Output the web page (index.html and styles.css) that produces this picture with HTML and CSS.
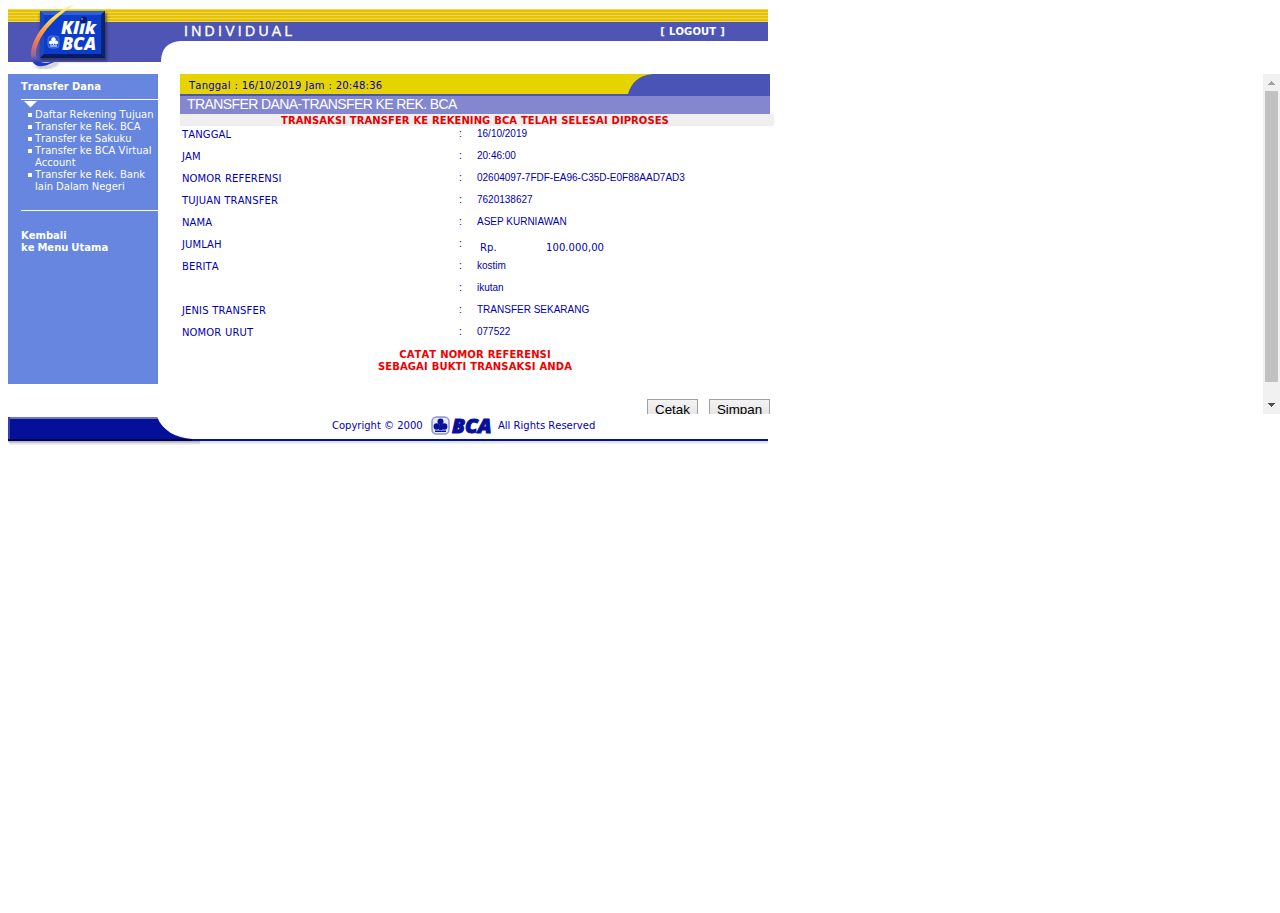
FILE: index.html
```html
<!DOCTYPE html>
<html lang="id">
<head>
<meta charset="utf-8">
<title>KlikBCA Individual</title>
<link rel="stylesheet" href="styles.css">
</head>
<body>
<header class="header">
  <svg class="header-art" width="760" height="74" viewBox="8 0 760 74">
    <defs>
      <linearGradient id="swoosh" gradientUnits="userSpaceOnUse" x1="0" y1="5" x2="0" y2="67">
        <stop offset="0" stop-color="#ffee80"/><stop offset=".2" stop-color="#ffdc48"/><stop offset=".4" stop-color="#ffa04a"/>
        <stop offset=".62" stop-color="#f0715c"/><stop offset=".82" stop-color="#8a68a0"/><stop offset=".93" stop-color="#1c3cc8"/>
      </linearGradient>
      <filter id="soft" x="-20%" y="-20%" width="140%" height="140%"><feGaussianBlur stdDeviation="1.6"/></filter>
    </defs>
    <path fill="#e6c200" d="M8 9h760v13H8z"/>
    <path fill="#f0d655" d="M8 9h760v1H8zM8 12h760v1H8zM8 15h760v1H8zM8 18h760v1H8zM8 21h760v1H8z"/>
    <path fill="#4f55b5" d="M8 22H768V41H181Q161 42 161 62H8z"/>
    <path d="M40 13h67v48H40z" fill="#202040" opacity=".6" filter="url(#soft)"/>
    <path d="M36 64Q42 72 58 63" fill="none" stroke="#777" stroke-width="3" opacity=".5" filter="url(#soft)"/>
    <path d="M40 11h65v47H40z" fill="#0a2d9c"/>
    <path d="M40 11h65l-4 4H44z" fill="#2c60d8"/>
    <path d="M40 11l4 4v39l-4 4z" fill="#1c48bc"/>
    <path d="M105 11v47l-4-4V15z" fill="#0b2273"/>
    <path d="M40 58l4-4h57l4 4z" fill="#061b66"/>
    <path d="M44 15h57v39H44z" fill="#0b3ccc"/>
    <path d="M75 4C50 13 31 37 31 55c0 13 12 15 28 4-12 6-23 5-23-5C36 39 52 19 75 4z" fill="url(#swoosh)"/>
    <text class="logo-word" x="61" y="34" textLength="35" lengthAdjust="spacingAndGlyphs">Klik</text>
    <text class="logo-word" x="62" y="49.500" textLength="34" lengthAdjust="spacingAndGlyphs">BCA</text>
    <circle cx="83.500" cy="20" r="3.600" fill="#0a1c66"/><circle cx="82" cy="19" r="1.200" fill="#4870dc"/>
    <rect x="48" y="36" width="11" height="12" rx="3" fill="#1d52d2" stroke="#5f8cf0" stroke-width=".7"/>
    <g fill="#fff"><circle cx="53.500" cy="39.500" r="2.200"/><circle cx="51" cy="42.500" r="2.100"/><circle cx="56" cy="42.500" r="2.100"/><path d="M53 40h1v5h-1zM50 45.500h7v1h-7z"/></g>
  </svg>
  <span class="segment">INDIVIDUAL</span>
  <a class="logout">[ LOGOUT ]</a>
</header>
<div class="body-row">
  <nav class="sidebar">
    <div class="side-title">Transfer Dana</div>
    <div class="side-menu">
      <svg class="pointer" width="13" height="8" viewBox="0 0 13 8"><path d="M0 1h13L6.500 7.500z" fill="#fff"/></svg>
      <ul class="menu">
        <li>Daftar Rekening Tujuan</li>
        <li>Transfer ke Rek. BCA</li>
        <li>Transfer ke Sakuku</li>
        <li>Transfer ke BCA Virtual<br>Account</li>
        <li>Transfer ke Rek. Bank<br>lain Dalam Negeri</li>
      </ul>
    </div>
    <div class="side-back">Kembali<br>ke Menu Utama</div>
  </nav>
  <main class="main">
    <div class="datebar">
      <span class="date">Tanggal : 16/10/2019 Jam : 20:48:36</span>
      <svg class="tab" width="142" height="20" viewBox="0 0 142 20"><path d="M0 20C3 9 11 1 25 0H142V20z" fill="#4a54b6"/></svg>
    </div>
    <h1 class="title"><span>TRANSFER DANA-TRANSFER KE REK. BCA</span></h1>
    <div class="status"><span>TRANSAKSI TRANSFER KE REKENING BCA TELAH SELESAI DIPROSES</span></div>
    <div class="details">
      <div class="row"><span class="label">TANGGAL</span><span class="colon">:</span><span class="value">16/10/2019</span></div>
      <div class="row"><span class="label">JAM</span><span class="colon">:</span><span class="value">20:46:00</span></div>
      <div class="row"><span class="label">NOMOR REFERENSI</span><span class="colon">:</span><span class="value">02604097-7FDF-EA96-C35D-E0F88AAD7AD3</span></div>
      <div class="row"><span class="label">TUJUAN TRANSFER</span><span class="colon">:</span><span class="value">7620138627</span></div>
      <div class="row"><span class="label">NAMA</span><span class="colon">:</span><span class="value">ASEP KURNIAWAN</span></div>
      <div class="row"><span class="label">JUMLAH</span><span class="colon">:</span><span class="money"><span class="currency">Rp.</span><span>100.000,00</span></span></div>
      <div class="row"><span class="label">BERITA</span><span class="colon">:</span><span class="value">kostim</span></div>
      <div class="row"><span class="label"></span><span class="colon">:</span><span class="value">ikutan</span></div>
      <div class="row"><span class="label">JENIS TRANSFER</span><span class="colon">:</span><span class="value">TRANSFER SEKARANG</span></div>
      <div class="row"><span class="label">NOMOR URUT</span><span class="colon">:</span><span class="value">077522</span></div>
    </div>
    <div class="notice">CATAT NOMOR REFERENSI<br>SEBAGAI BUKTI TRANSAKSI ANDA</div>
    <div class="actions"><button class="btn cetak">Cetak</button><button class="btn simpan">Simpan</button></div>
  </main>
  <div class="scrollbar">
    <svg width="17" height="17" viewBox="0 0 17 17"><path d="M5 11h7v-1h-1V9h-1V8H9V7H8v1H7v1H6v1H5z" fill="#a3a3a3"/></svg>
    <div class="thumb"></div>
    <svg width="17" height="17" viewBox="0 0 17 17"><path d="M5 6h7v1h-1v1h-1v1H9v1H8V9H7V8H6V7H5z" fill="#505050"/></svg>
  </div>
</div>
<footer class="footer">
  <svg class="footer-art" width="760" height="34" viewBox="8 414 760 34">
    <defs>
      <linearGradient id="fade" x1="0" y1="0" x2="0" y2="1"><stop offset="0" stop-color="#aaa"/><stop offset="1" stop-color="#fff"/></linearGradient>
    </defs>
    <path d="M8 441h192v4H10z" fill="url(#fade)"/>
    <path d="M200 441h568v2H200z" fill="#dde5eb"/><path d="M200 443h568v1H200z" fill="#f2f5dc"/>
    <path d="M8 417H157C163 431 176 438 192 439H768V441H8z" fill="#04109a"/>
    <path d="M8 417H157l1 2H8z" fill="#6f74c4"/><path d="M8 417h2v22H8z" fill="#353fae"/>
    <path d="M8 439h184v2H8z" fill="#000050"/>
  </svg>
  <div class="legal">
    <span class="copyright">Copyright © 2000</span>
    <svg class="bca" width="64" height="22" viewBox="430 414 64 22">
      <rect x="432" y="417" width="17" height="17" rx="4.500" fill="#e4e7f5" stroke="#8d96d0" stroke-width="1.500"/>
      <g fill="#06109a"><circle cx="440.500" cy="421.500" r="3"/><circle cx="436.800" cy="426.500" r="3.200"/><circle cx="444.200" cy="426.500" r="3.200"/><path d="M440 422h1.500l1 8h-3.500zM435 430.500h11v1.500h-11z"/></g>
      <text class="bca-word" x="452" y="432.500" textLength="39.500" lengthAdjust="spacingAndGlyphs">BCA</text>
    </svg>
    <span class="rights">All Rights Reserved</span>
  </div>
</footer>
</body>
</html>
```
FILE: styles.css
```css
* { box-sizing: border-box; }
body { margin: 0; background: #fff; font: 10px/12px "DejaVu Sans", sans-serif; font-kerning: none; word-spacing: .3px; color: #0000b4; }
.header { position: relative; width: 760px; height: 74px; margin-left: 8px; display: flex; padding: 25px 43px 0 176px; justify-content: space-between; color: #fff; }
.header-art { position: absolute; left: 0; top: 0; }
.segment { position: relative; font: 14px/13px "Liberation Sans", sans-serif; letter-spacing: 3.3px; -webkit-text-stroke: .35px #fff; }
.logout { position: relative; font-weight: bold; padding-top: 1px; letter-spacing: .15px; }
.logo-word { font: italic 800 17px "Open Sans", sans-serif; fill: #fff; }
.body-row { display: flex; height: 340px; padding-left: 8px; }
.sidebar { width: 150px; height: 310px; background: #6686e0; color: #fff; padding: 7px 0 0 13px; flex: none; word-spacing: -.1px; }
.side-title { font-weight: bold; height: 18px; }
.side-menu { height: 112px; border-top: 1px solid #fff; border-bottom: 1px solid #fff; }
.pointer { display: block; margin: 0 0 1px 3px; }
.menu { list-style: none; margin: 0; padding: 0 0 0 7px; white-space: nowrap; }
.menu li { padding-left: 7px; background: linear-gradient(#fff, #fff) 0 4px / 4px 4px no-repeat; }
.side-back { font-weight: bold; margin-top: 19px; word-spacing: -.5px; }
.main { width: 594px; height: 340px; margin-left: 22px; overflow: hidden; flex: none; }
.datebar { display: flex; justify-content: space-between; width: 590px; height: 22px; background: #e6d400; border-bottom: 2px solid #4a54b6; }
.date { padding: 6px 0 0 9px; white-space: nowrap; letter-spacing: .22px; }
.title { width: 590px; height: 18px; margin: 0; padding-left: 7px; background: #8486ce; color: #fff; font: 14px/17px "Liberation Sans", sans-serif; font-kerning: auto; word-spacing: 0; letter-spacing: -.6px; }
.status { height: 12px; background: #efefef; color: #e60000; font-weight: bold; text-align: center; white-space: nowrap; padding-right: 4px; line-height: 13px; letter-spacing: .07px; }
.details { height: 223px; }
.row { display: flex; height: 22px; padding: 3px 0 0 2px; }
.label { width: 277px; letter-spacing: .12px; }
.colon, .value { font: 10px/11px "Liberation Sans", sans-serif; font-kerning: auto; word-spacing: 0; margin-top: -1px; }
.colon { width: 18px; }
.money { display: flex; padding: 3px 0 0 3px; letter-spacing: .08px; }
.currency { width: 66px; }
.notice { width: 590px; color: #f00000; font-weight: bold; text-align: center; letter-spacing: .12px; }
.actions { display: flex; justify-content: flex-end; gap: 11px; width: 590px; margin-top: 26px; }
.btn { height: 22px; padding: 0; border: 1px solid #a0a0a0; border-radius: 0; background: linear-gradient(#f3f3f3, #e2e2e2); color: #000; font: 13.330px/20px "Liberation Sans", sans-serif; }
.cetak { width: 51px; }
.simpan { width: 61px; }
.scrollbar { width: 17px; height: 340px; margin-left: auto; background: #f1f1f1; display: flex; flex-direction: column; }
.thumb { width: 13px; height: 291px; margin: 0 2px 15px; background: #c1c1c1; }
.footer { position: relative; width: 760px; height: 34px; margin-left: 8px; }
.footer-art { position: absolute; left: 0; top: 0; }
.legal { position: relative; display: flex; padding-left: 324px; white-space: nowrap; word-spacing: 0; }
.copyright { width: 98px; padding-top: 6px; }
.rights { padding: 6px 0 0 4px; }
.bca { overflow: visible; }
.bca-word { font: italic 800 19px "Open Sans", sans-serif; fill: #06109a; stroke: #06109a; stroke-width: 1px; }
```
